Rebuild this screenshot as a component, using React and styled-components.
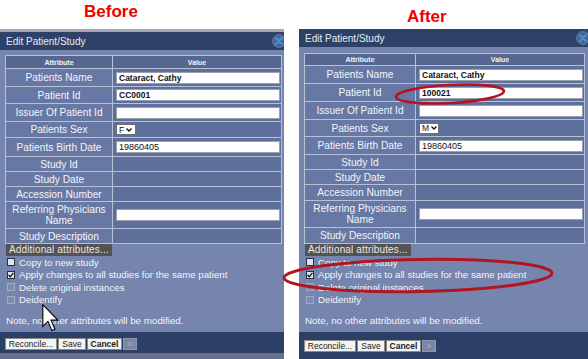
import React from 'react';
import styled, { createGlobalStyle } from 'styled-components';

const Global = createGlobalStyle`
  html, body { margin: 0; padding: 0; background: #fff; }
  body { font-family: "Liberation Sans", Arial, sans-serif; }
`;

const Page = styled.div`
  position: relative;
  width: 588px;
  height: 359px;
  overflow: hidden;
  display: flex;
  gap: 15px;
  background: #fff;
`;

const Column = styled.div`
  display: flex;
  flex-direction: column;
  flex: none;
  width: ${p => p.$w}px;
  height: 359px;
`;

const Caption = styled.div`
  flex: none;
  height: 29px;
  box-sizing: border-box;
  padding-top: ${p => p.$top}px;
  padding-left: ${p => p.$left}px;
  font: bold 17px/20px "Liberation Sans", Arial, sans-serif;
  color: #ee0000;
`;

const Panel = styled.div`
  flex: 1;
  display: flex;
  flex-direction: column;
  overflow: hidden;
  background: #7585ad;
`;

const TopStrip = styled.div`
  flex: none;
  height: 3px;
  background: #a3a9b9;
`;

const BottomStrip = styled.div`
  flex: none;
  height: 6px;
  background: #66718f;
`;

const TitleBar = styled.div`
  position: relative;
  flex: none;
  height: 18px;
  display: flex;
  align-items: center;
  padding-left: 6px;
  background: #2e4269;
  color: #e6eaf2;
  font-size: 10px;
`;

const CloseIcon = styled.svg`
  position: absolute;
  right: -2px;
  top: 2px;
  width: 14px;
  height: 14px;
`;

const Body = styled.div`
  flex: 1;
  display: flex;
  flex-direction: column;
  padding: ${p => p.$top}px ${p => p.$right}px 0 5px;
`;

const Table = styled.div`
  display: flex;
  flex-direction: column;
  border-top: 1px solid #b6c0d6;
  border-left: 1px solid #b6c0d6;
`;

const Row = styled.div`
  box-sizing: border-box;
  height: ${p => p.$h}px;
  display: grid;
  grid-template-columns: ${p => p.$label}px 1fr;
  border-bottom: 1px solid #b6c0d6;
`;

const HeadCell = styled.div`
  display: flex;
  align-items: center;
  justify-content: center;
  background: #56678f;
  color: #f2f4f8;
  font-size: 7px;
  font-weight: bold;
  border-right: 1px solid #b6c0d6;
`;

const LabelCell = styled.div`
  display: flex;
  align-items: center;
  justify-content: center;
  text-align: center;
  background: #6878a4;
  color: #f3f5fa;
  font-size: 10.2px;
  line-height: 11px;
  border-right: 1px solid #b6c0d6;
`;

const ValueCell = styled.div`
  display: flex;
  align-items: center;
  padding: 0 1px 0 3px;
  background: #5f6f9b;
  border-right: 1px solid #b6c0d6;
`;

const Field = styled.div`
  flex: 1;
  box-sizing: border-box;
  height: 12px;
  background: #fff;
  border: 1px solid #9aa0b0;
  padding-left: 2px;
  color: #111;
  font-size: ${p => (p.$bold ? 8.5 : 9)}px;
  font-weight: ${p => (p.$bold ? 'bold' : 'normal')};
  line-height: 10px;
  white-space: nowrap;
`;

const SelectBox = styled.div`
  box-sizing: border-box;
  width: 20px;
  height: 11px;
  display: flex;
  align-items: center;
  gap: 2px;
  padding-left: 2px;
  background: #fff;
  border: 1px solid #707070;
  color: #111;
  font-size: 8.5px;
  line-height: 8px;
`;

const AttrButton = styled.div`
  align-self: flex-start;
  box-sizing: border-box;
  width: 106px;
  height: 12px;
  margin-left: 1px;
  padding-left: 3px;
  background: #535353;
  color: #e8e8e8;
  font-size: 10px;
  letter-spacing: 0.15px;
  line-height: 12px;
  white-space: nowrap;
`;

const Checks = styled.div`
  display: flex;
  flex-direction: column;
`;

const CheckRow = styled.div`
  height: 12.5px;
  display: flex;
  align-items: center;
  gap: 4px;
  color: #f2f4f9;
  font-size: 9.7px;
  white-space: nowrap;
`;

const Box = styled.span`
  box-sizing: border-box;
  flex: none;
  width: 8px;
  height: 8px;
  margin-left: 2px;
  display: flex;
  align-items: center;
  justify-content: center;
  border: 1px solid ${p => (p.$disabled ? '#a2abc4' : '#2a2f3c')};
  background: ${p => (p.$disabled ? '#7c8bb1' : '#dfe3ee')};
`;

const Note = styled.div`
  margin-top: 8px;
  margin-left: 1px;
  color: #f2f4f9;
  font-size: 9.8px;
  line-height: 14px;
  white-space: nowrap;
`;

const Footer = styled.div`
  flex: none;
  box-sizing: border-box;
  height: ${p => p.$h}px;
  padding: ${p => p.$top}px 0 0 5px;
  display: flex;
  align-items: flex-start;
  gap: 1px;
  background: #2c3f66;
`;

const Btn = styled.div`
  box-sizing: border-box;
  width: ${p => p.$w}px;
  height: 12px;
  display: flex;
  align-items: center;
  justify-content: center;
  border: 1px solid ${p => (p.$disabled ? '#8c96b0' : '#8a8a8a')};
  background: ${p => (p.$disabled ? '#7a86a4' : '#f3f3f3')};
  color: ${p => (p.$disabled ? '#a9b2c8' : '#222')};
  font-size: 8.5px;
  font-weight: ${p => (p.$bold ? 'bold' : 'normal')};
`;

const Overlay = styled.svg`
  position: absolute;
  left: 0;
  top: 0;
  width: 588px;
  height: 359px;
  pointer-events: none;
`;

const Cursor = styled.svg`
  position: absolute;
  left: 42px;
  top: 304px;
  width: 17px;
  height: 28px;
  pointer-events: none;
`;

const Chevron = () => (
  <svg width="6" height="4" viewBox="0 0 6 4">
    <path d="M0.5 0.5 L3 3 L5.5 0.5" fill="none" stroke="#111" strokeWidth="1.3" />
  </svg>
);

const Tick = () => (
  <svg width="6" height="6" viewBox="0 0 6 6">
    <path d="M0.6 3 L2.3 4.8 L5.4 0.8" fill="none" stroke="#111" strokeWidth="1.3" />
  </svg>
);

const Close = () => (
  <CloseIcon viewBox="0 0 14 14">
    <circle cx="7" cy="7" r="6.3" fill="#4c6389" stroke="#6b80a3" strokeWidth="1" />
    <path d="M4 4 L10 10 M10 4 L4 10" stroke="#3c95e4" strokeWidth="2" strokeLinecap="round" />
  </CloseIcon>
);

const leftHeights = [13, 18, 17, 18, 16, 19, 15, 15, 15, 27, 15];
const rightHeights = [12, 18, 18, 18, 17, 18, 15, 15, 16, 27, 16];

const labels = [
  'Patients Name',
  'Patient Id',
  'Issuer Of Patient Id',
  'Patients Sex',
  'Patients Birth Date',
  'Study Id',
  'Study Date',
  'Accession Number',
  'Referring Physicians Name',
  'Study Description',
];

function renderValue(kind, data) {
  switch (kind) {
    case 0:
      return <Field $bold>{data.name}</Field>;
    case 1:
      return <Field $bold>{data.id}</Field>;
    case 2:
      return <Field />;
    case 3:
      return (
        <SelectBox>
          {data.sex}
          <Chevron />
        </SelectBox>
      );
    case 4:
      return <Field>{data.birth}</Field>;
    case 8:
      return <Field />;
    default:
      return null;
  }
}

const checks = [
  { text: 'Copy to new study', checked: false, disabled: false },
  { text: 'Apply changes to all studies for the same patient', checked: true, disabled: false },
  { text: 'Delete original instances', checked: false, disabled: true },
  { text: 'Deidentify', checked: false, disabled: true },
];

function Dialog({ heights, labelW, bodyTop, bodyRight, footerH, footerTop, data, strips }) {
  return (
    <Panel>
      {strips && <TopStrip />}
      <TitleBar>
        Edit Patient/Study
        <Close />
      </TitleBar>
      <Body $top={bodyTop} $right={bodyRight}>
        <Table>
          <Row $h={heights[0]} $label={labelW}>
            <HeadCell>Attribute</HeadCell>
            <HeadCell>Value</HeadCell>
          </Row>
          {labels.map((l, i) => (
            <Row key={l} $h={heights[i + 1]} $label={labelW}>
              <LabelCell>{i === 8 ? <span>Referring Physicians<br />Name</span> : l}</LabelCell>
              <ValueCell>{renderValue(i, data)}</ValueCell>
            </Row>
          ))}
        </Table>
        <AttrButton>Additional attributes...</AttrButton>
        <Checks>
          {checks.map(c => (
            <CheckRow key={c.text}>
              <Box $disabled={c.disabled}>{c.checked && <Tick />}</Box>
              {c.text}
            </CheckRow>
          ))}
        </Checks>
        <Note>Note, no other attributes will be modified.</Note>
      </Body>
      <Footer $h={footerH} $top={footerTop}>
        <Btn $w={52}>Reconcile...</Btn>
        <Btn $w={28}>Save</Btn>
        <Btn $w={35} $bold>Cancel</Btn>
        <Btn $w={14} $disabled>&gt;</Btn>
      </Footer>
      {strips && <BottomStrip />}
    </Panel>
  );
}

export default function App() {
  return (
    <Page>
      <Global />
      <Column $w={284}>
        <Caption $top={2} $left={84}>Before</Caption>
        <Dialog
          heights={leftHeights}
          labelW={107}
          bodyTop={5}
          bodyRight={2}
          footerH={21}
          footerTop={6}
          strips
          data={{ name: 'Cataract, Cathy', id: 'CC0001', sex: 'F', birth: '19860405' }}
        />
      </Column>
      <Column $w={289}>
        <Caption $top={7} $left={108}>After</Caption>
        <Dialog
          heights={rightHeights}
          labelW={111}
          bodyTop={6}
          bodyRight={3}
          footerH={27}
          footerTop={8}
          data={{ name: 'Cataract, Cathy', id: '100021', sex: 'M', birth: '19860405' }}
        />
      </Column>
      <Cursor viewBox="0 0 12 20">
        <path d="M0.5 0.5 L0.5 16 L4.2 12.4 L7 19 L9.2 18 L6.4 11.5 L11.2 11.5 Z" fill="#fff" stroke="#000" strokeWidth="0.8" strokeLinejoin="miter" />
      </Cursor>
      <Overlay viewBox="0 0 588 359">
        <ellipse cx="450" cy="94" rx="54" ry="9" transform="rotate(-3 450 94)" fill="none" stroke="#b3151f" strokeWidth="2.6" />
        <ellipse cx="418" cy="275.5" rx="134" ry="16" transform="rotate(-1 418 275.5)" fill="none" stroke="#b3151f" strokeWidth="3" />
      </Overlay>
    </Page>
  );
}
